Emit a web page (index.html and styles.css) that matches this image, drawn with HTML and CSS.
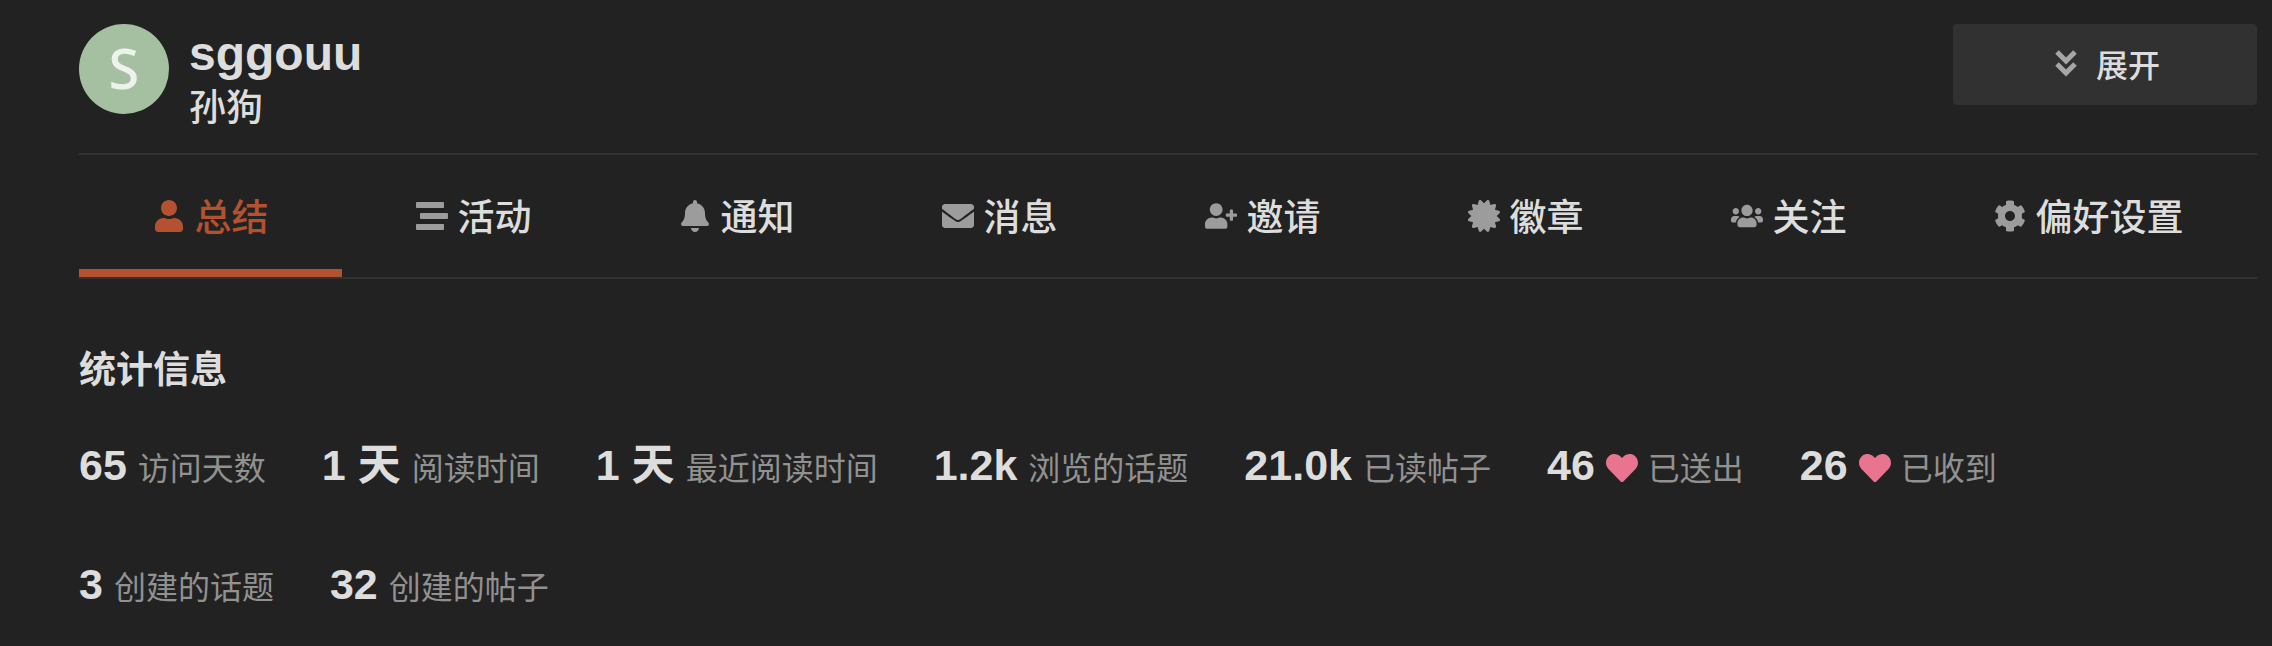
FILE: index.html
```html
<!DOCTYPE html>
<html lang="zh-CN">
<head>
    <meta charset="UTF-8">
    <meta name="viewport" content="width=device-width, initial-scale=1.0">
    <title>sggouu - 总结</title>
    <link rel="stylesheet" href="styles.css">
</head>
<body>
    <div class="user-main">
        <header class="profile">
            <div class="avatar">S</div>
            <div class="names">
                <h1 class="username">sggouu</h1>
                <div class="full-name">孙狗</div>
            </div>
            <button type="button" class="btn-expand">
                <svg class="icon" viewBox="0 0 32 32" aria-hidden="true"><path class="chevron" d="M7 5l9 9 9-9M7 17l9 9 9-9"/></svg>
                <span>展开</span>
            </button>
        </header>

        <nav class="tabs">
            <a href="#summary" class="tab active">
                <svg class="icon" viewBox="0 0 448 512" aria-hidden="true"><path d="M224 256c70.7 0 128-57.3 128-128S294.7 0 224 0 96 57.3 96 128s57.3 128 128 128zm89.6 32h-16.7c-22.2 10.2-46.9 16-72.9 16s-50.6-5.8-72.9-16h-16.7C60.2 288 0 348.2 0 422.4V464c0 26.5 21.5 48 48 48h352c26.5 0 48-21.5 48-48v-41.6c0-74.2-60.2-134.4-134.4-134.4z"/></svg>
                <span>总结</span>
            </a>
            <a href="#activity" class="tab">
                <svg class="icon" viewBox="0 0 512 512" aria-hidden="true"><path d="M16 128h416c8.84 0 16-7.16 16-16V48c0-8.84-7.16-16-16-16H16C7.16 32 0 39.16 0 48v64c0 8.84 7.16 16 16 16zm480 80H80c-8.84 0-16 7.16-16 16v64c0 8.84 7.16 16 16 16h416c8.84 0 16-7.16 16-16v-64c0-8.84-7.16-16-16-16zm-64 176H16c-8.84 0-16 7.16-16 16v64c0 8.84 7.16 16 16 16h416c8.84 0 16-7.16 16-16v-64c0-8.84-7.16-16-16-16z"/></svg>
                <span>活动</span>
            </a>
            <a href="#notifications" class="tab">
                <svg class="icon" viewBox="0 0 448 512" aria-hidden="true"><path d="M224 512c35.32 0 63.97-28.65 63.97-64H160.03c0 35.35 28.65 64 63.97 64zm215.39-149.71c-19.32-20.76-55.47-51.99-55.47-154.29 0-77.7-54.48-139.9-127.94-155.16V32c0-17.67-14.32-32-31.98-32s-31.98 14.33-31.98 32v20.84C118.56 68.1 64.08 130.3 64.08 208c0 102.3-36.15 133.53-55.47 154.29-6 6.45-8.66 14.16-8.61 21.71.11 16.4 12.98 32 32.1 32h383.8c19.12 0 32-15.6 32.1-32 .05-7.55-2.61-15.27-8.61-21.71z"/></svg>
                <span>通知</span>
            </a>
            <a href="#messages" class="tab">
                <svg class="icon" viewBox="0 0 512 512" aria-hidden="true"><path d="M502.3 190.8c3.9-3.1 9.7-.2 9.7 4.7V400c0 26.5-21.5 48-48 48H48c-26.5 0-48-21.5-48-48V195.6c0-5 5.7-7.8 9.7-4.7 22.4 17.4 52.1 39.5 154.1 113.6 21.1 15.4 56.7 47.8 92.2 47.6 35.7.3 72-32.8 92.3-47.6 102-74.1 131.6-96.3 154-113.7zM256 320c23.2.4 56.6-29.2 73.4-41.4 132.7-96.3 142.8-104.7 173.4-128.7 5.8-4.5 9.2-11.5 9.2-18.9v-19c0-26.5-21.5-48-48-48H48c-26.5 0-48 21.5-48 48v19c0 7.4 3.4 14.3 9.2 18.9 30.6 23.9 40.7 32.4 173.4 128.7 16.8 12.2 50.2 41.8 73.4 41.4z"/></svg>
                <span>消息</span>
            </a>
            <a href="#invited" class="tab">
                <svg class="icon" viewBox="0 0 640 512" aria-hidden="true"><path d="M624 208h-64v-64c0-8.8-7.2-16-16-16h-32c-8.8 0-16 7.2-16 16v64h-64c-8.8 0-16 7.2-16 16v32c0 8.8 7.2 16 16 16h64v64c0 8.8 7.2 16 16 16h32c8.8 0 16-7.2 16-16v-64h64c8.8 0 16-7.2 16-16v-32c0-8.8-7.2-16-16-16zm-400 48c70.7 0 128-57.3 128-128S294.7 0 224 0 96 57.3 96 128s57.3 128 128 128zm89.6 32h-16.7c-22.2 10.2-46.9 16-72.9 16s-50.6-5.8-72.9-16h-16.7C60.2 288 0 348.2 0 422.4V464c0 26.5 21.5 48 48 48h352c26.5 0 48-21.5 48-48v-41.6c0-74.2-60.2-134.4-134.4-134.4z"/></svg>
                <span>邀请</span>
            </a>
            <a href="#badges" class="tab">
                <svg class="icon" viewBox="0 0 512 512" aria-hidden="true"><path d="M458.622 255.92l45.985-45.005c13.708-12.977 7.316-36.039-10.664-40.339l-62.65-15.99 17.661-62.015c4.991-17.838-11.829-34.663-29.661-29.671l-61.994 17.667-15.984-62.671C337.085.197 313.765-6.276 300.99 7.228L256 53.57 211.011 7.229c-12.63-13.351-36.047-7.234-40.325 10.668l-15.984 62.671-61.995-17.667C74.87 57.907 58.056 74.738 63.046 92.572l17.661 62.015-62.65 15.99C.069 174.878-6.31 197.944 7.392 210.915l45.985 45.005-45.985 45.004c-13.708 12.977-7.316 36.039 10.664 40.339l62.65 15.99-17.661 62.015c-4.991 17.838 11.829 34.663 29.661 29.671l61.994-17.667 15.984 62.671c4.439 18.575 27.696 24.018 40.325 10.668L256 458.61l44.989 46.001c12.5 13.488 35.987 7.486 40.325-10.668l15.984-62.671 61.994 17.667c17.836 4.994 34.651-11.837 29.661-29.671l-17.661-62.015 62.65-15.99c17.987-4.302 24.366-27.367 10.664-40.339l-45.984-45.004z"/></svg>
                <span>徽章</span>
            </a>
            <a href="#follow" class="tab">
                <svg class="icon" viewBox="0 0 640 512" aria-hidden="true"><path d="M96 224c35.3 0 64-28.7 64-64s-28.7-64-64-64-64 28.7-64 64 28.7 64 64 64zm448 0c35.3 0 64-28.7 64-64s-28.7-64-64-64-64 28.7-64 64 28.7 64 64 64zm32 32h-64c-17.6 0-33.5 7.1-45.1 18.6 40.3 22.1 68.9 62 75.1 109.4h66c17.7 0 32-14.3 32-32v-32c0-35.3-28.7-64-64-64zm-256 0c61.9 0 112-50.1 112-112S381.9 32 320 32 208 82.1 208 144s50.1 112 112 112zm76.8 32h-8.3c-20.8 10-43.9 16-68.5 16s-47.6-6-68.5-16h-8.3C179.6 288 128 339.6 128 403.2V432c0 26.5 21.5 48 48 48h288c26.5 0 48-21.5 48-48v-28.8c0-63.6-51.6-115.2-115.2-115.2zm-223.7-13.4C161.5 263.1 145.6 256 128 256H64c-35.3 0-64 28.7-64 64v32c0 17.7 14.3 32 32 32h65.9c6.3-47.4 34.9-87.3 75.2-109.4z"/></svg>
                <span>关注</span>
            </a>
            <a href="#preferences" class="tab">
                <svg class="icon" viewBox="0 0 512 512" aria-hidden="true"><path d="M487.4 315.7l-42.6-24.6c4.3-23.2 4.3-47 0-70.2l42.6-24.6c4.9-2.8 7.1-8.6 5.5-14-11.1-35.6-30-67.8-54.7-94.6-3.8-4.1-10-5.1-14.8-2.3L380.8 110c-17.9-15.4-38.5-27.3-60.8-35.1V25.8c0-5.6-3.9-10.5-9.4-11.7-36.7-8.2-74.3-7.8-109.2 0-5.5 1.2-9.4 6.1-9.4 11.7V75c-22.2 7.9-42.8 19.8-60.8 35.1L88.7 85.5c-4.9-2.8-11-1.9-14.8 2.3-24.7 26.7-43.6 58.9-54.7 94.6-1.7 5.4.6 11.2 5.5 14L67.3 221c-4.3 23.2-4.3 47 0 70.2l-42.6 24.6c-4.9 2.8-7.1 8.6-5.5 14 11.1 35.6 30 67.8 54.7 94.6 3.8 4.1 10 5.1 14.8 2.3l42.6-24.6c17.9 15.4 38.5 27.3 60.8 35.1v49.2c0 5.6 3.9 10.5 9.4 11.7 36.7 8.2 74.3 7.8 109.2 0 5.5-1.2 9.4-6.1 9.4-11.7v-49.2c22.2-7.9 42.8-19.8 60.8-35.1l42.6 24.6c4.9 2.8 11 1.9 14.8-2.3 24.7-26.7 43.6-58.9 54.7-94.6 1.5-5.5-.7-11.3-5.6-14.1zM256 336c-44.1 0-80-35.9-80-80s35.9-80 80-80 80 35.9 80 80-35.9 80-80 80z"/></svg>
                <span>偏好设置</span>
            </a>
        </nav>

        <section class="stats-section">
            <h2 class="stats-title">统计信息</h2>
            <ul class="stats">
                <li><span class="value">65</span><span class="label">访问天数</span></li>
                <li><span class="value">1 天</span><span class="label">阅读时间</span></li>
                <li><span class="value">1 天</span><span class="label">最近阅读时间</span></li>
                <li><span class="value">1.2k</span><span class="label">浏览的话题</span></li>
                <li><span class="value">21.0k</span><span class="label">已读帖子</span></li>
                <li>
                    <span class="value">46</span>
                    <span class="label"><svg class="icon heart" viewBox="0 0 512 512" aria-hidden="true"><path d="M462.3 62.6C407.5 15.9 326 24.3 275.7 76.2L256 96.5l-19.7-20.3C186.1 24.3 104.5 15.9 49.7 62.6c-62.8 53.6-66.1 149.8-9.9 207.9l193.5 199.8c12.5 12.9 32.8 12.9 45.3 0l193.5-199.8c56.3-58.1 53-154.3-9.8-207.9z"/></svg>已送出</span>
                </li>
                <li>
                    <span class="value">26</span>
                    <span class="label"><svg class="icon heart" viewBox="0 0 512 512" aria-hidden="true"><path d="M462.3 62.6C407.5 15.9 326 24.3 275.7 76.2L256 96.5l-19.7-20.3C186.1 24.3 104.5 15.9 49.7 62.6c-62.8 53.6-66.1 149.8-9.9 207.9l193.5 199.8c12.5 12.9 32.8 12.9 45.3 0l193.5-199.8c56.3-58.1 53-154.3-9.8-207.9z"/></svg>已收到</span>
                </li>
                <li><span class="value">3</span><span class="label">创建的话题</span></li>
                <li><span class="value">32</span><span class="label">创建的帖子</span></li>
            </ul>
        </section>
    </div>
</body>
</html>
```
FILE: styles.css
```css
body {
    margin: 0;
    background-color: #222;
    color: #ddd;
    font-family: "Liberation Sans", "Noto Sans CJK SC", sans-serif;
    font-size: 32px;
}
.user-main {
    padding: 24px 15px 24px 79px;
}
.icon {
    width: 32px;
    height: 32px;
    flex-shrink: 0;
    fill: #9c9c9c;
}

/* profile header */
.profile {
    display: flex;
    align-items: flex-start;
    padding-bottom: 19px;
    border-bottom: 2px solid #313131;
}
.avatar {
    box-sizing: border-box;
    width: 90px;
    height: 90px;
    border-radius: 50%;
    background-color: #a5bfa1;
    color: #edf2ec;
    font-family: "Noto Sans", "Open Sans", sans-serif;
    font-size: 56px;
    font-weight: 500;
    line-height: 86px;
    text-align: center;
}
.names {
    flex: 1;
    margin-left: 20px;
}
.username {
    margin: 0;
    font-size: 48px;
    line-height: 60px;
}
.full-name {
    font-size: 37px;
    font-weight: 500;
    line-height: 50px;
}
.btn-expand {
    display: flex;
    align-items: center;
    justify-content: center;
    gap: 14px;
    width: 304px;
    height: 81px;
    padding: 0 0 4px;
    border: none;
    border-radius: 4px;
    background-color: #313131;
    color: #ddd;
    font: inherit;
    font-weight: 500;
    cursor: pointer;
}
.chevron {
    fill: none;
    stroke: #a6a6a6;
    stroke-width: 5;
}

/* tabs */
.tabs {
    display: flex;
    border-bottom: 2px solid #313131;
}
.tab {
    display: flex;
    flex: 1 1 auto;
    align-items: center;
    justify-content: center;
    gap: 10px;
    padding: 37px 0 29px;
    border-bottom: 8px solid transparent;
    color: #ddd;
    font-size: 37px;
    font-weight: 500;
    line-height: 42px;
    text-decoration: none;
}
.tab span {
    padding-top: 6px;
}
.tab.active {
    border-bottom-color: #b35130;
    color: #b35130;
}
.tab.active .icon {
    fill: #b35130;
}

/* stats */
.stats-title {
    margin: 71px 0 49px;
    font-size: 37px;
    line-height: 42px;
}
.stats {
    display: flex;
    flex-wrap: wrap;
    row-gap: 67px;
    margin: 0;
    padding: 0;
    list-style: none;
}
.stats li {
    display: flex;
    align-items: baseline;
    gap: 11px;
    margin-right: 56px;
    line-height: 48px;
}
.value {
    font-size: 43px;
    font-weight: bold;
}
.label {
    color: #919191;
}
.heart {
    margin-right: 10px;
    fill: #e9748f;
    vertical-align: -4px;
}
```
